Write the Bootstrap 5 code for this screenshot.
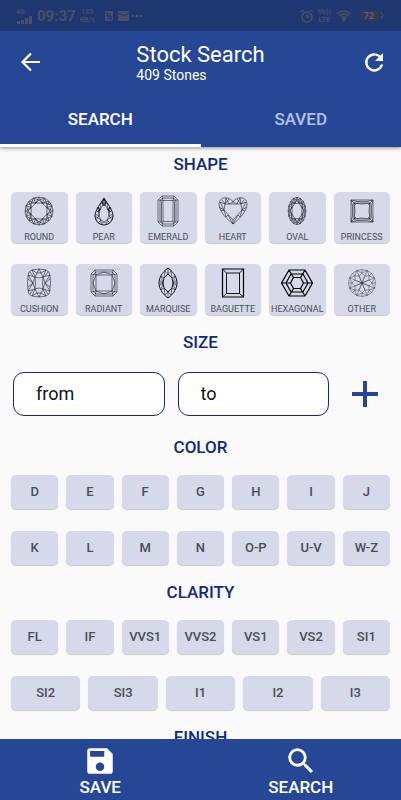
<!DOCTYPE html>
<html lang="en">
<head>
<meta charset="utf-8">
<meta name="viewport" content="width=device-width, initial-scale=1">
<title>Stock Search</title>
<link href="https://cdn.jsdelivr.net/npm/bootstrap@5.3.0/dist/css/bootstrap.min.css" rel="stylesheet">
<style>
  :root { --brand: #264796; --brand-dark: #1f3770; --ink: #0f2b80; --tile: #d5d9e9; --dim: #48506a; }
  body { font-family: Roboto, "Liberation Sans", sans-serif; background: #fafafa; }
  button { font-family: inherit; }
  .brand-bg { background: var(--brand); }
  .status { background: var(--brand-dark); color: var(--dim); height: 31px; padding: 0 16px; font-weight: 700; }
  .clock { font-size: 15px; line-height: 16px; }
  .tiny { font-size: 7px; line-height: 8px; }
  .app-head { height: 60px; padding-top: 2px; }
  .head-btn { width: 60px; }
  .head-btn.back { padding: 0 0 0 19px; }
  .head-btn.reload { padding: 0 15px 0 0; }
  .page-title { font-size: 22px; line-height: 25px; font-weight: 400; }
  .page-sub { font-size: 14px; line-height: 16px; }
  .tab-btn { height: 56px; font-size: 17px; font-weight: 500; color: #b4c3ec; border-bottom: 3px solid transparent; }
  .tab-btn.current { color: #fff; border-color: #fff; }
  .tab-btn.btn { padding: 4px 0 0; }
  .top-shade { box-shadow: 0 1px 4px rgba(0,0,0,.45); z-index: 1; }
  main { padding: 5px 11px 0; min-height: 0; }
  .group-title { color: var(--ink); font-size: 17px; line-height: 24px; font-weight: 500; margin: 0 0 16px; text-align: center; }
  section + section { margin-top: 15px; }
  .shape-grid { display: grid; grid-template-columns: repeat(6, minmax(0, 1fr)); gap: 21px 8px; }
  .chips { display: flex; gap: 8px; }
  .chips + .chips { margin-top: 22px; }
  .shape-btn, .chip { background: var(--tile); border: 0; border-radius: 5px; color: #4b4d56; box-shadow: 0 1px 1px rgba(0,0,0,.2); padding: 0; }
  .shape-btn { height: 51px; font-size: 9px; line-height: 12px; white-space: nowrap; gap: 3px; }
  .shape-btn svg { width: 34px; height: 34px; fill: none; stroke: #22242c; stroke-width: .6; margin-top: 2px; }
  .shape-btn .fine { stroke-width: .4; }
  .shape-btn .firm { stroke: #000; stroke-width: .9; }
  .shape-btn .bold { stroke: #000; stroke-width: 1.2; }
  .chip { height: 34px; flex: 1 1 0; font-size: 13px; font-weight: 500; }
  .size-row { padding: 2px 2px 4px; gap: 13px; }
  .size-box { flex: 1 1 0; min-width: 0; height: 44px; border: 1px solid var(--ink); border-radius: 11px; padding: 0 22px 2px; font-size: 18px; background: #fff; color: #111; }
  .size-box::placeholder { color: #111; opacity: 1; }
  .plus { width: 46px; color: var(--brand); }
  .bottom-btn { height: 61px; font-size: 17px; line-height: 18px; font-weight: 500; }
</style>
</head>
<body>
<svg class="d-none" aria-hidden="true">
  <defs>
    <path id="facet" vector-effect="non-scaling-stroke" d="M0-14 3.3-7.9H-3.3L0-14M-3.3-7.9 0-11 3.3-7.9M0-11-5.4-12.9M0-11 5.4-12.9M5.4-12.9 3.3-7.9"/>
    <g id="brilliant">
      <circle r="14" vector-effect="non-scaling-stroke"/>
      <use href="#facet"/><use href="#facet" transform="rotate(45)"/><use href="#facet" transform="rotate(90)"/><use href="#facet" transform="rotate(135)"/><use href="#facet" transform="rotate(180)"/><use href="#facet" transform="rotate(225)"/><use href="#facet" transform="rotate(270)"/><use href="#facet" transform="rotate(315)"/>
    </g>
    <path id="petal" d="M0 0-2.900-7 0-10 2.900-7 0 0M0-10V-13.500M-5.200-12.500 0-10 5.200-12.500M-5.200-12.500 0-13.500 5.200-12.500M2.900-7 5.200-12.500"/>
  </defs>
</svg>

<div class="d-flex flex-column vh-100 overflow-hidden">
  <header class="top-shade position-relative brand-bg text-white flex-shrink-0">
    <div class="status d-flex align-items-center justify-content-between">
      <div class="d-flex align-items-center gap-1">
        <div class="d-flex flex-column">
          <span class="tiny">4G</span>
          <svg width="17" height="8" fill="currentColor" aria-hidden="true"><path d="M1 5h3v3H1zM5 4h3v4H5zM9 2h3v6H9zM13 0h3v8h-3z"/></svg>
        </div>
        <span class="clock">09:37</span>
        <span class="tiny text-center">185<br>KB/s</span>
        <svg class="ms-1" width="42" height="12" aria-hidden="true"><path fill="currentColor" d="M2 1h8v10H2zM15 1h11v10H15zM29 5h2v2h-2zM33 5h2v2h-2zM37 5h2v2h-2z"/><path d="M8 4H4v2h4v3H4M0 0l11 12M15 3l6 3 5-3" fill="none" stroke="#1f3770"/></svg>
      </div>
      <div class="d-flex align-items-center gap-1">
        <svg width="14" height="14" fill="none" stroke="currentColor" stroke-width="1.5" aria-hidden="true"><circle cx="7" cy="8" r="5"/><path d="M7 5v3h3M1 3l3-2M13 3l-3-2"/></svg>
        <span class="tiny text-center">Vo))<br>LTE</span>
        <svg width="18" height="13" fill="none" stroke="currentColor" stroke-width="1.5" aria-hidden="true"><path d="M2 5q7-6 14 0M4 7q5-4 10 0M6 9q3-2 6 0"/><path d="M9 12l-1-2h2z"/></svg>
        <svg width="28" height="13" aria-hidden="true"><rect x="2" y="1" width="21" height="11" rx="4" fill="#303a56"/><path d="M24 3l2 3.500-2 3.500" fill="none" stroke="currentColor"/><text x="12" y="10" text-anchor="middle" font-size="9" fill="#5a6078">72</text></svg>
      </div>
    </div>
    <div class="app-head d-flex align-items-center justify-content-between">
      <button type="button" class="head-btn back btn text-white border-0 text-start" aria-label="Back"><svg class="d-block" width="24" height="24" viewBox="0 0 24 24" fill="none" stroke="currentColor" stroke-width="2.200"><path d="M21 12H4M12 3.500 3.500 12l8.500 8.500"/></svg></button>
      <div>
        <h1 class="page-title m-0">Stock Search</h1>
        <div class="page-sub">409 Stones</div>
      </div>
      <button type="button" class="head-btn reload btn text-white border-0 d-flex justify-content-end" aria-label="Refresh"><svg width="24" height="24" viewBox="0 0 24 24" fill="none" stroke="currentColor" stroke-width="2.400"><path d="M17.800 6.600A8 8 0 1 0 20 14.500"/><path d="M21 3v8h-8z" fill="currentColor" stroke="none"/></svg></button>
    </div>
    <div class="d-flex" role="tablist">
      <button type="button" role="tab" aria-selected="true" class="tab-btn current btn rounded-0 border-top-0 border-start-0 border-end-0 w-50">SEARCH</button>
      <button type="button" role="tab" aria-selected="false" class="tab-btn btn rounded-0 border-top-0 border-start-0 border-end-0 w-50">SAVED</button>
    </div>
  </header>

  <main class="flex-fill overflow-hidden">
    <section>
      <h2 class="group-title">SHAPE</h2>
      <div class="shape-grid">
        <button type="button" class="shape-btn d-flex flex-column align-items-center"><svg viewBox="-17 -17 34 34"><use href="#brilliant"/></svg>ROUND</button>
        <button type="button" class="shape-btn d-flex flex-column align-items-center"><svg viewBox="-17 -17 34 34"><path class="firm" d="M0-13C3-8 9-1 9 5A9 9 0 0 1-9 5C-9-1-3-8 0-13Z"/><path d="M0-8 4-1 5 5 3 9 0 11-3 9-5 5-4-1ZM0-13V-8M-3-8 0-8 3-8M-3-8-4-1-6-4M3-8 4-1 6-4M-6-4-5 5-9 3M6-4 5 5 9 3M-9 5-3 9-6 12M9 5 3 9 6 12M-8 9-5 5M8 9 5 5M-3 13 0 11 3 13M-3 9-3 13M3 9V13"/><path class="firm" d="M0-12-2-8 0-5 2-8ZM-6-4-4-1-7 1M6-4 4-1 7 1"/></svg>PEAR</button>
        <button type="button" class="shape-btn d-flex flex-column align-items-center"><svg viewBox="-17 -17 34 34"><path d="M-6-15H6L10-11V11L6 15H-6L-10 11V-11ZM-5.500-13H5.500L8-10V10L5.500 13H-5.500L-8 10V-10ZM-5-10.500H5V10.500H-5ZM-6-15-5-10.500-10-11M6-15 5-10.500 10-11M-6 15-5 10.500-10 11M6 15 5 10.500 10 11M-6.500-10V10M6.500-10V10"/></svg>EMERALD</button>
        <button type="button" class="shape-btn d-flex flex-column align-items-center"><svg viewBox="-17 -17 34 34"><path d="M0-9C3-15 14-15 14-7 14 1 5 9 0 13-5 9-14 1-14-7-14-15-3-15 0-9ZM-8-7H8L9-1 0 9-9-1ZM0-9-4-7-7-13-8-7-13-9-9-1-14-4M0-9 4-7 7-13 8-7 13-9 9-1 14-4M-12 0-9-1-7 6M12 0 9-1 7 6M-7 6-5 4 0 13 5 4 7 6M0 9V13M-11-11-8-7-4-12M11-11 8-7 4-12"/></svg>HEART</button>
        <button type="button" class="shape-btn d-flex flex-column align-items-center"><svg viewBox="-17 -17 34 34"><use href="#brilliant" transform="scale(.63 .97)"/></svg>OVAL</button>
        <button type="button" class="shape-btn d-flex flex-column align-items-center"><svg viewBox="-17 -17 34 34"><path d="M-11-11H11V11H-11ZM-8-8H8V8H-8ZM-11-11-6-6M11-11 6-6M-11 11-6 6M11 11 6 6M-11-11-5-9.500H5L11-11M-11 11-5 9.500H5L11 11M-11-11-9.500-5V5L-11 11M11-11 9.500-5V5L11 11M-8-8Q-6 0-8 8 0 6 8 8 6 0 8-8 0-6-8-8"/></svg>PRINCESS</button>
        <button type="button" class="shape-btn d-flex flex-column align-items-center"><svg viewBox="-17 -17 34 34"><path d="M-7-13Q0-15 7-13 11-12 11-7 12 0 11 7 11 12 7 13 0 15-7 13-11 12-11 7-12 0-11-7-11-12-7-13ZM-4-6Q0-4 4-6 3 0 4 6 0 4-4 6-3 0-4-6ZM-4-6 0-14 4-6 11-8 6 0 11 8 4 6 0 14-4 6-11 8-6 0-11-8ZM-7-13-4-6-6 0-4 6-7 13M7-13 4-6 6 0 4 6 7 13M-7-13-2-10 2-10 7-13M-7 13-2 10H2L7 13M-9-11-6-7M9-11 6-7M-9 11-6 7M9 11 6 7M-11-4-6 0-11 4M11-4 6 0 11 4"/></svg>CUSHION</button>
        <button type="button" class="shape-btn d-flex flex-column align-items-center"><svg viewBox="-17 -17 34 34"><path d="M-9-13H9L13-9V9L9 13H-9L-13 9V-9ZM-8-11H8L11-8V8L8 11H-8L-11 8V-8ZM-8-8H8V8H-8ZM-9-13-8-8-13-9M9-13 8-8 13-9M-9 13-8 8-13 9M9 13 8 8 13 9M-8-8 0-11 8-8 11 0 8 8 0 11-8 8-11 0Z"/></svg>RADIANT</button>
        <button type="button" class="shape-btn d-flex flex-column align-items-center"><svg viewBox="-17 -17 34 34"><path class="firm" d="M0-15C12-6 12 6 0 15-12 6-12-6 0-15ZM0-9 4-5 5 0 4 5 0 9-4 5-5 0-4-5Z"/><path d="M0-15V-9M0 15V9M-3-12 0-9 3-12 4-5 7-7 5 0 9-3M-3-12-4-5-7-7-5 0-9-3M-9 3-5 0-7 7-4 5-3 12 0 9 3 12 4 5 7 7 5 0 9 3M-9 0H-5M9 0H5"/></svg>MARQUISE</button>
        <button type="button" class="shape-btn d-flex flex-column align-items-center"><svg viewBox="-17 -17 34 34"><path class="bold" d="M-10.500-14H10.500V14H-10.500Z"/><path class="firm" d="M-6.500-10H6.500V10.500H-6.500ZM-10.500-14-6.500-10M10.500-14 6.500-10M-10.500 14-6.500 10.500M10.500 14 6.500 10.500"/></svg>BAGUETTE</button>
        <button type="button" class="shape-btn d-flex flex-column align-items-center"><svg viewBox="-17 -17 34 34"><path class="bold" d="M-8-13H8L15.500 0 8 13H-8L-15.500 0ZM-6-9H6L11 0 6 9H-6L-11 0ZM-3.500-5.500H3.500L6.500 0 3.500 5.500H-3.500L-6.500 0ZM-8-13-3.500-5.500M8-13 3.500-5.500M-15.500 0H-6.500M15.500 0H6.500M-8 13-3.500 5.500M8 13 3.500 5.500"/></svg>HEXAGONAL</button>
        <button type="button" class="shape-btn d-flex flex-column align-items-center"><svg viewBox="-17 -17 34 34"><g class="fine"><use href="#petal"/><use href="#petal" transform="rotate(45)"/><use href="#petal" transform="rotate(90)"/><use href="#petal" transform="rotate(135)"/><use href="#petal" transform="rotate(180)"/><use href="#petal" transform="rotate(225)"/><use href="#petal" transform="rotate(270)"/><use href="#petal" transform="rotate(315)"/></g></svg>OTHER</button>
      </div>
    </section>

    <section>
      <h2 class="group-title">SIZE</h2>
      <div class="size-row d-flex align-items-center">
        <input class="size-box" type="text" inputmode="decimal" placeholder="from" aria-label="Size from">
        <input class="size-box" type="text" inputmode="decimal" placeholder="to" aria-label="Size to">
        <button type="button" class="plus btn border-0 p-0 d-flex justify-content-center" aria-label="Add size"><svg width="28" height="28" viewBox="0 0 28 28" fill="none" stroke="currentColor" stroke-width="4"><path d="M14 1v26M1 14h26"/></svg></button>
      </div>
    </section>

    <section>
      <h2 class="group-title">COLOR</h2>
      <div class="chips">
        <button type="button" class="chip">D</button><button type="button" class="chip">E</button><button type="button" class="chip">F</button><button type="button" class="chip">G</button><button type="button" class="chip">H</button><button type="button" class="chip">I</button><button type="button" class="chip">J</button>
      </div>
      <div class="chips">
        <button type="button" class="chip">K</button><button type="button" class="chip">L</button><button type="button" class="chip">M</button><button type="button" class="chip">N</button><button type="button" class="chip">O-P</button><button type="button" class="chip">U-V</button><button type="button" class="chip">W-Z</button>
      </div>
    </section>

    <section>
      <h2 class="group-title">CLARITY</h2>
      <div class="chips">
        <button type="button" class="chip">FL</button><button type="button" class="chip">IF</button><button type="button" class="chip">VVS1</button><button type="button" class="chip">VVS2</button><button type="button" class="chip">VS1</button><button type="button" class="chip">VS2</button><button type="button" class="chip">SI1</button>
      </div>
      <div class="chips">
        <button type="button" class="chip">SI2</button><button type="button" class="chip">SI3</button><button type="button" class="chip">I1</button><button type="button" class="chip">I2</button><button type="button" class="chip">I3</button>
      </div>
    </section>

    <section>
      <h2 class="group-title">FINISH</h2>
    </section>
  </main>

  <footer class="brand-bg d-flex flex-shrink-0">
    <button type="button" class="bottom-btn btn border-0 rounded-0 text-white w-50 p-0 d-flex flex-column align-items-center justify-content-end pb-1"><svg width="34" height="34" viewBox="0 0 24 24" fill="currentColor" aria-hidden="true"><path fill-rule="evenodd" d="M17 3H5a2 2 0 0 0-2 2v14a2 2 0 0 0 2 2h14a2 2 0 0 0 2-2V7zM12 19a3 3 0 1 1 0-6 3 3 0 0 1 0 6zM15 9H5V5h10z"/></svg>SAVE</button>
    <button type="button" class="bottom-btn btn border-0 rounded-0 text-white w-50 p-0 d-flex flex-column align-items-center justify-content-end pb-1"><svg width="34" height="34" viewBox="0 0 24 24" fill="currentColor" aria-hidden="true"><path fill-rule="evenodd" d="M15.500 14h-.79l-.28-.27A6.470 6.470 0 0 0 16 9.500 6.500 6.500 0 1 0 9.500 16c1.610 0 3.090-.59 4.230-1.570l.27.28v.79l5 4.990L20.490 19zM9.500 14a4.500 4.500 0 1 1 0-9 4.500 4.500 0 0 1 0 9z"/></svg>SEARCH</button>
  </footer>
</div>
<script src="https://cdn.jsdelivr.net/npm/bootstrap@5.3.0/dist/js/bootstrap.bundle.min.js"></script>
</body>
</html>
